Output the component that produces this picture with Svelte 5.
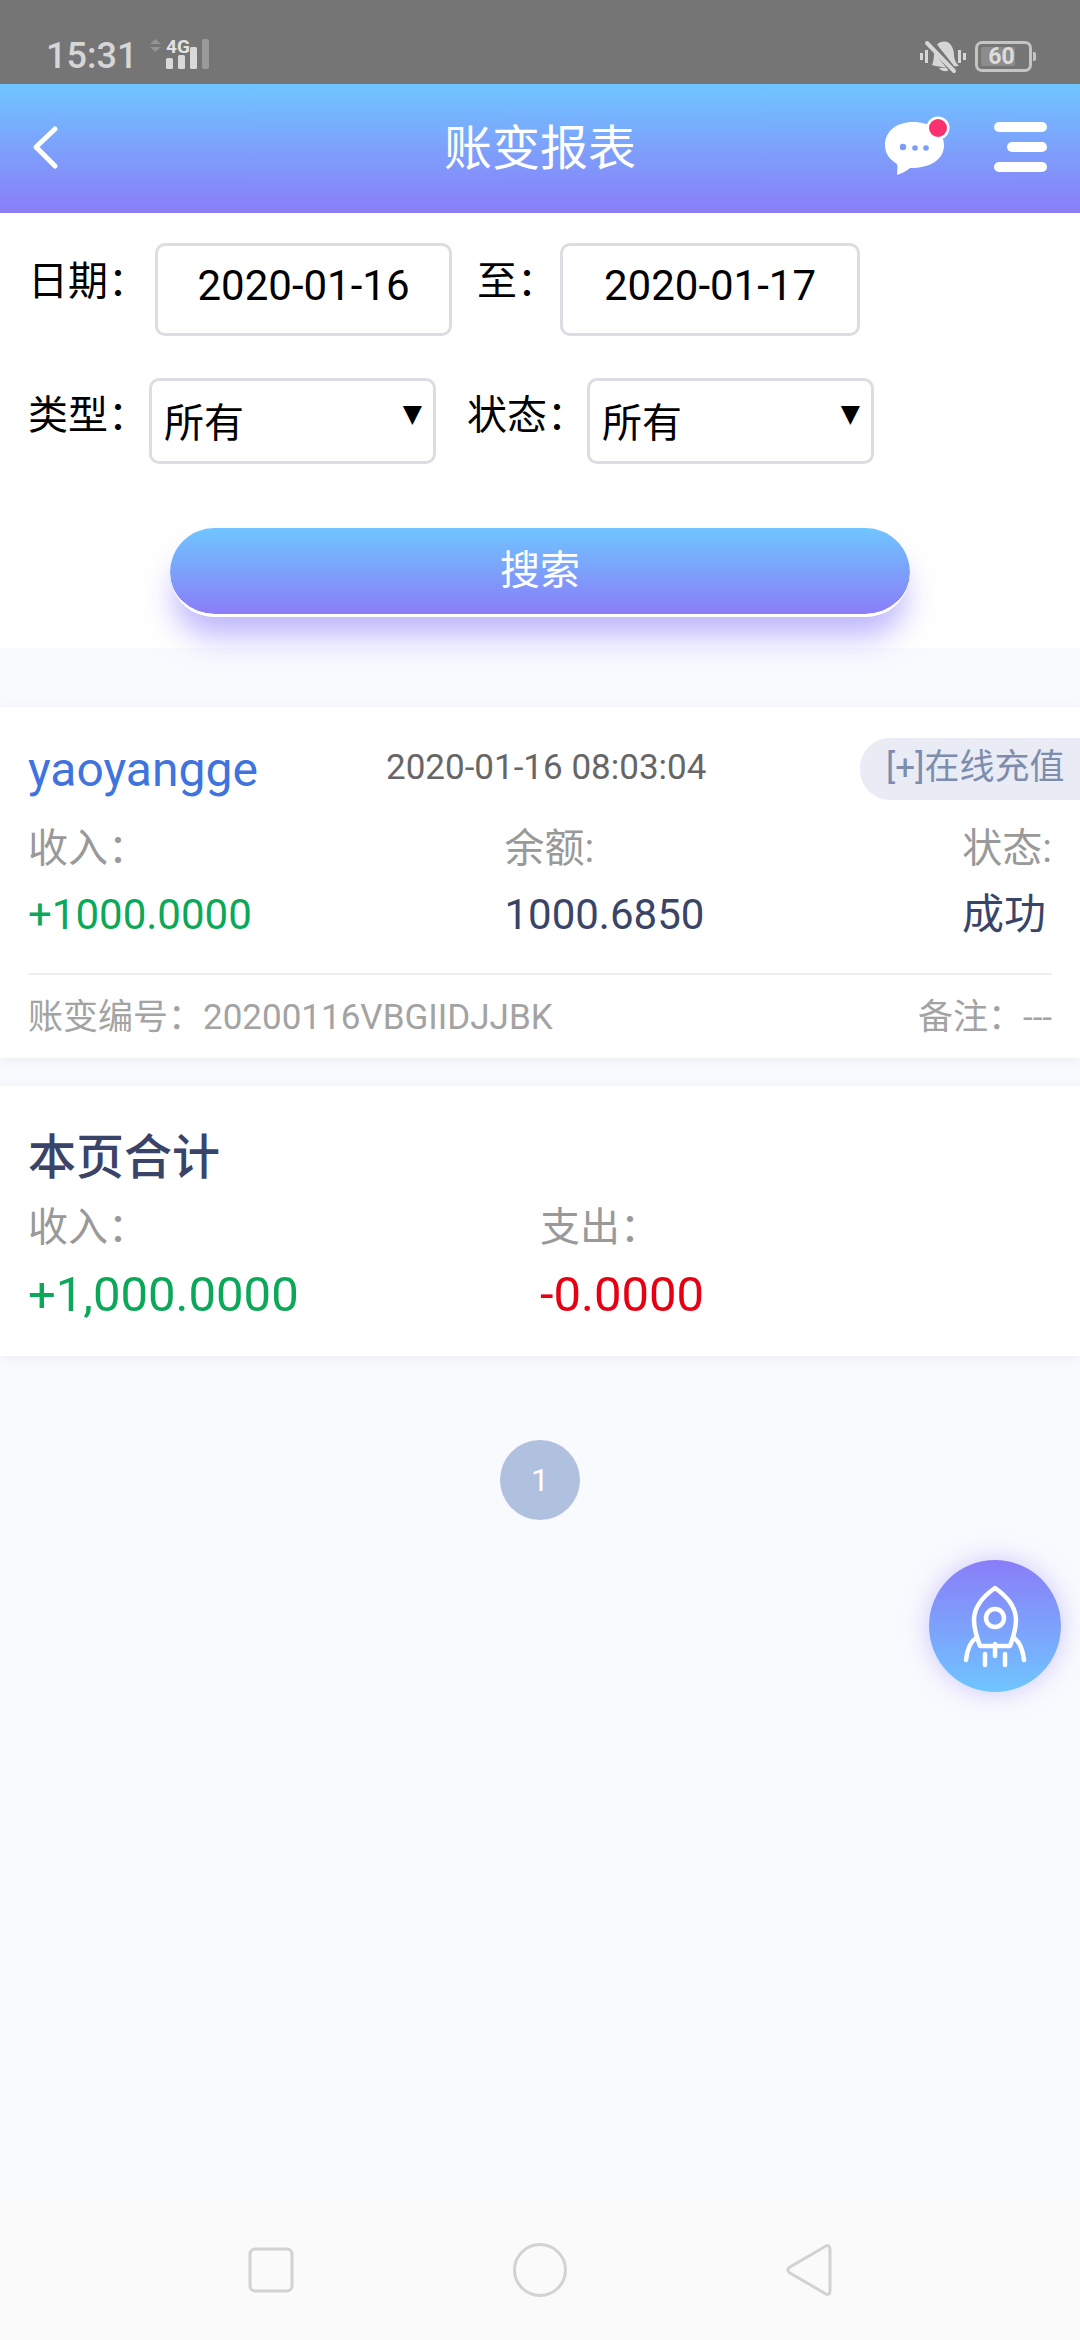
<script>
    const cols = [
        { label: '收入：', value: '+1000.0000', cls: 'green' },
        { label: '余额:', value: '1000.6850', cls: 'navy' },
        { label: '状态:', value: '成功', cls: 'navy' }
    ];
</script>

<div class="page">
    <div class="statusbar">
        <div class="status-left">
            <span class="time">15:31</span>
            <svg class="signal" width="66" height="42" viewBox="0 -4 66 42">
                <path d="M2 6 L7.5 1 L13 6Z M2 9 L13 9 L7.5 14Z" fill="#949494"/>
                <text x="18" y="15" class="fourg">4G</text>
                <rect x="18" y="20" width="7" height="11" rx="1.5" fill="#d9d9d9"/>
                <rect x="30" y="17" width="7" height="14" rx="1.5" fill="#d9d9d9"/>
                <rect x="42" y="9" width="7" height="22" rx="1.5" fill="#d9d9d9"/>
                <rect x="54" y="1" width="7" height="30" rx="2.5" fill="#9a9a9a"/>
            </svg>
        </div>
        <div class="status-right">
            <svg width="48" height="36" viewBox="0 0 48 36">
                <path d="M13 27 C17 20 12 8 22 4 C31 1 35 10 35 17 C35 22 38 26 40 28 C32 29 22 30 13 27Z M20 30 L31 29 C31 34 24 35 20 30Z" fill="#d6d6d6"/>
                <path d="M10 2 L36 35" stroke="#757575" stroke-width="7"/>
                <path d="M8 5 L35 33" stroke="#d6d6d6" stroke-width="4" stroke-linecap="round"/>
                <rect x="1" y="15" width="3" height="7" fill="#d6d6d6"/>
                <rect x="6" y="12" width="3" height="13" fill="#d6d6d6"/>
                <rect x="39" y="12" width="3" height="13" fill="#d6d6d6"/>
                <rect x="44" y="15" width="3" height="7" fill="#d6d6d6"/>
            </svg>
            <div class="battery">
                <span class="battery-fill"></span>
                <span class="battery-num">60</span>
            </div>
        </div>
    </div>

    <header class="topbar">
        <svg class="back" width="27" height="45" viewBox="0 0 27 45">
            <path d="M23 4 L4 22 L23 41" fill="none" stroke="#fff" stroke-width="5" stroke-linecap="round" stroke-linejoin="round"/>
        </svg>
        <h1>账变报表</h1>
        <div class="top-actions">
            <svg width="68" height="62" viewBox="0 0 68 62">
                <path d="M30 6 C48 6 61 15 61 29 C61 44 47 52 27 52 C22 56 17 58 14 59 C14 55 15 51 14 48 C6 43 2 37 2 29 C2 15 14 6 30 6Z" fill="#fff"/>
                <circle cx="20" cy="31" r="3.2" fill="#7b9df9"/>
                <circle cx="32" cy="32" r="2.8" fill="#7b9df9"/>
                <circle cx="43" cy="32" r="2.8" fill="#7b9df9"/>
                <circle cx="55" cy="12" r="11.5" fill="#fff"/>
                <circle cx="55" cy="12" r="9" fill="#f9326f"/>
            </svg>
            <div class="menu">
                <span></span>
                <span class="short"></span>
                <span></span>
            </div>
        </div>
    </header>

    <section class="filter">
        <div class="filter-row dates">
            <span class="lbl">日期：</span>
            <div class="field date">2020-01-16</div>
            <span class="lbl">至：</span>
            <div class="field date second">2020-01-17</div>
        </div>
        <div class="filter-row selects">
            <span class="lbl">类型：</span>
            <div class="field select"><span class="sel-text">所有</span><span class="arrow">▼</span></div>
            <span class="lbl">状态：</span>
            <div class="field select"><span class="sel-text">所有</span><span class="arrow">▼</span></div>
        </div>
        <button class="search">搜索</button>
    </section>

    <section class="card record">
        <div class="rec-top">
            <span class="user">yaoyangge</span>
            <span class="stamp">2020-01-16 08:03:04</span>
            <span class="tag">[+]在线充值</span>
        </div>
        <div class="rec-cols">
            {#each cols as c, i}
                <div class="col col{i}">
                    <span class="cap">{c.label}</span>
                    <span class="val {c.cls}">{c.value}</span>
                </div>
            {/each}
        </div>
        <div class="rec-foot">
            <span>账变编号：20200116VBGIIDJJBK</span>
            <span>备注：---</span>
        </div>
    </section>

    <section class="card total">
        <h2>本页合计</h2>
        <div class="total-cols">
            <div class="tcol">
                <span class="cap">收入：</span>
                <span class="big green">+1,000.0000</span>
            </div>
            <div class="tcol">
                <span class="cap">支出：</span>
                <span class="big red">-0.0000</span>
            </div>
        </div>
    </section>

    <div class="pager"><span class="pg">1</span></div>

    <div class="spacer"></div>

    <div class="navbar">
        <svg width="46" height="46" viewBox="0 0 46 46"><rect x="2" y="2" width="42" height="42" rx="5" fill="none" stroke="#d2d2d2" stroke-width="3"/></svg>
        <svg width="56" height="56" viewBox="0 0 56 56"><circle cx="28" cy="28" r="25.5" fill="none" stroke="#d2d2d2" stroke-width="3"/></svg>
        <svg width="46" height="54" viewBox="0 0 46 54"><path d="M40 3 C42 2 44 3 44 6 L44 48 C44 51 42 52 40 51 L4 30 C1 28 1 26 4 24Z" fill="none" stroke="#d2d2d2" stroke-width="3"/></svg>
    </div>

    <div class="fab">
        <svg width="70" height="84" viewBox="0 0 70 84">
            <g fill="none" stroke="#fff" stroke-width="4.5" stroke-linecap="round" stroke-linejoin="round">
                <path d="M35 4 C25 11 14 22 14 36 C14 45 17 54 20 62 L50 62 C53 54 56 45 56 36 C56 22 45 11 35 4Z"/>
                <circle cx="35" cy="34" r="9"/>
                <path d="M16 54 C10 58 7 67 6 76"/>
                <path d="M54 54 C60 58 63 67 64 76"/>
                <path d="M25 70 L25 81"/>
                <path d="M35 60 L35 72"/>
                <path d="M45 70 L45 81"/>
            </g>
        </svg>
    </div>
</div>

<style>
    :global(body) {
        margin: 0;
    }
    .page {
        position: relative;
        width: 1080px;
        height: 2340px;
        display: flex;
        flex-direction: column;
        background: #f9fafe;
        font-family: Roboto, "Noto Sans CJK SC", sans-serif;
        overflow: hidden;
    }
    .statusbar {
        height: 84px;
        flex: none;
        background: #757575;
        display: flex;
        justify-content: space-between;
        align-items: center;
        padding: 28px 45px 0 46px;
        box-sizing: border-box;
        color: #d6d6d6;
    }
    .status-left, .status-right {
        display: flex;
        align-items: center;
    }
    .time {
        font-size: 36px;
        font-weight: 500;
        margin-right: 11px;
    }
    .signal {
        margin-top: -2px;
    }
    .fourg {
        font-size: 19px;
        font-weight: 700;
        fill: #e2e2e2;
    }
    .status-right {
        gap: 8px;
    }
    .battery {
        position: relative;
        width: 47px;
        height: 25px;
        border: 3px solid #c4c4c4;
        border-radius: 7px;
        display: flex;
        align-items: center;
        justify-content: center;
        padding-right: 4px;
        box-sizing: content-box;
        margin-right: 3px;
    }
    .battery::after {
        content: '';
        position: absolute;
        right: -7px;
        top: 8px;
        width: 3px;
        height: 9px;
        background: #c4c4c4;
        border-radius: 0 2px 2px 0;
    }
    .battery-fill {
        position: absolute;
        left: 3px;
        top: 3px;
        bottom: 3px;
        width: 34px;
        background: #8c8c8c;
        border-radius: 2px;
    }
    .battery-num {
        position: relative;
        font-size: 23px;
        font-weight: 700;
        color: #dcdcdc;
        line-height: 1;
    }
    .topbar {
        height: 129px;
        flex: none;
        background: linear-gradient(180deg, #6fc5ff, #8a7df8);
        display: flex;
        align-items: center;
        justify-content: space-between;
        padding: 0 33px 0 32px;
        box-sizing: border-box;
        position: relative;
    }
    .back {
        margin-top: -2px;
    }
    .topbar h1 {
        position: absolute;
        left: 0;
        right: 0;
        top: 35px;
        margin: 0;
        text-align: center;
        font-size: 48px;
        font-weight: 400;
        line-height: 60px;
        color: #fff;
    }
    .top-actions {
        display: flex;
        align-items: center;
        gap: 43px;
        margin-top: -3px;
    }
    .menu {
        width: 53px;
        display: flex;
        flex-direction: column;
        align-items: flex-end;
        gap: 10px;
    }
    .menu span {
        display: block;
        width: 53px;
        height: 10px;
        background: #fff;
        border-radius: 5px;
    }
    .menu .short {
        width: 40px;
    }
    .filter {
        height: 435px;
        flex: none;
        background: #fff;
        box-sizing: border-box;
        padding-top: 30px;
        position: relative;
        z-index: 1;
    }
    .filter-row {
        display: flex;
        align-items: flex-start;
        color: #000;
    }
    .lbl {
        font-size: 40px;
        line-height: 50px;
        white-space: nowrap;
    }
    .field {
        box-sizing: border-box;
        background: #fff;
        border: 3px solid #dcdde3;
        border-radius: 10px;
        color: #000;
    }
    .dates {
        height: 93px;
        padding-left: 28px;
    }
    .dates .lbl {
        margin-top: 14px;
    }
    .date {
        width: 297px;
        height: 93px;
        font-size: 42px;
        line-height: 80px;
        text-align: center;
        margin: 0 25px 0 7px;
    }
    .date.second {
        width: 300px;
        margin: 0 0 0 3px;
    }
    .selects {
        height: 86px;
        margin-top: 42px;
        padding-left: 28px;
    }
    .selects .lbl {
        margin-top: 13px;
    }
    .select {
        width: 287px;
        height: 86px;
        position: relative;
        margin: 0 31px 0 1px;
        padding-left: 12px;
        font-size: 40px;
        line-height: 86px;
    }
    .selects .select:last-child {
        margin-right: 0;
        margin-left: 0;
    }
    .arrow {
        position: absolute;
        right: 11px;
        top: 15px;
        font-size: 25px;
        line-height: 36px;
        font-family: "DejaVu Sans", sans-serif;
    }
    .search {
        display: block;
        width: 740px;
        height: 89px;
        margin: 64px 0 0 170px;
        padding: 0 0 8px;
        border: none;
        border-bottom: 3px solid #fff;
        border-radius: 45px;
        background: linear-gradient(180deg, #6fc5ff, #8a7df8) padding-box;
        color: #fff;
        font-family: inherit;
        font-size: 40px;
        box-shadow: 0 24px 30px -4px rgba(138, 125, 248, 0.55);
    }
    .card {
        background: #fff;
        box-shadow: 0 2px 10px rgba(40, 50, 90, 0.07);
        flex: none;
    }
    .record {
        margin-top: 59px;
        height: 351px;
        box-sizing: border-box;
        padding: 31px 28px 0 28px;
    }
    .rec-top {
        position: relative;
        display: flex;
        align-items: center;
        height: 62px;
    }
    .user {
        font-size: 48px;
        color: #3f73dd;
        width: 358px;
        white-space: nowrap;
    }
    .stamp {
        font-size: 35px;
        color: #666;
        margin-top: -4px;
        white-space: nowrap;
        margin-right: auto;
    }
    .tag {
        margin-right: -28px;
        height: 62px;
        line-height: 60px;
        padding: 0 18px 0 26px;
        background: #e9ecf5;
        border-radius: 30px 0 0 30px;
        color: #7e8cad;
        font-size: 35px;
        white-space: nowrap;
        width: 176px;
    }
    .rec-cols {
        display: flex;
        margin-top: 25px;
        padding-bottom: 24px;
        border-bottom: 2px solid #eceef1;
        height: 124px;
    }
    .col {
        display: flex;
        flex-direction: column;
        gap: 14px;
    }
    .col0 {
        width: 479px;
    }
    .col1 {
        width: 460px;
    }
    .col2 {
        flex: 1;
        align-items: flex-end;
    }
    .col2 .val {
        margin-right: 6px;
    }
    .cap {
        font-size: 40px;
        line-height: 48px;
        color: #999;
        white-space: nowrap;
    }
    .val {
        font-size: 42px;
        line-height: 56px;
        white-space: nowrap;
    }
    .green {
        color: #0aa858;
    }
    .navy {
        color: #3a4468;
    }
    .red {
        color: #e60012;
    }
    .rec-foot {
        display: flex;
        justify-content: space-between;
        font-size: 35px;
        line-height: 56px;
        color: #a3a3a3;
        margin-top: 15px;
    }
    .total {
        margin-top: 28px;
        height: 270px;
        box-sizing: border-box;
        padding: 40px 28px 0;
    }
    .total h2 {
        margin: 0;
        font-size: 48px;
        font-weight: 500;
        line-height: 64px;
        color: #3a4468;
    }
    .total-cols {
        display: flex;
        margin-top: 14px;
    }
    .tcol {
        display: flex;
        flex-direction: column;
        gap: 12px;
        width: 512px;
    }
    .big {
        font-size: 49px;
        line-height: 62px;
    }
    .pager {
        margin-top: 84px;
        display: flex;
        justify-content: center;
        flex: none;
    }
    .pg {
        width: 80px;
        height: 80px;
        border-radius: 50%;
        background: #b0c1e0;
        color: #fff;
        font-size: 32px;
        line-height: 80px;
        text-align: center;
    }
    .spacer {
        flex: 1;
    }
    .navbar {
        flex: none;
        height: 140px;
        background: #fafafa;
        display: flex;
        align-items: center;
        justify-content: space-between;
        padding: 0 248px;
        box-sizing: border-box;
    }
    .fab {
        position: absolute;
        left: 929px;
        top: 1560px;
        width: 132px;
        height: 132px;
        border-radius: 50%;
        background: linear-gradient(180deg, #8a7df8, #6fc5ff);
        box-shadow: 0 0 26px rgba(138, 125, 248, 0.4);
        display: flex;
        align-items: center;
        justify-content: center;
    }
</style>
